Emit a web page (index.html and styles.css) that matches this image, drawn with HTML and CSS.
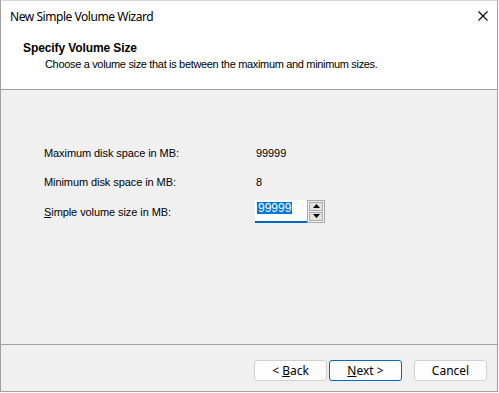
FILE: index.html
```html
<!DOCTYPE html>
<html>
<head>
<meta charset="utf-8">
<link rel="stylesheet" href="styles.css">
</head>
<body>
<div class="window">
  <div class="titlebar">
    <span class="title">New Simple Volume Wizard</span>
    <svg class="close" width="10" height="10" viewBox="0 0 10 10"><path d="M0.5 0.5 L9.5 9.5 M9.5 0.5 L0.5 9.5" stroke="#000" stroke-width="1.1" fill="none"/></svg>
  </div>
  <div class="header">
    <div class="heading">Specify Volume Size</div>
    <div class="subheading">Choose a volume size that is between the maximum and minimum sizes.</div>
  </div>
  <div class="content">
    <div class="row">
      <span class="label">Maximum disk space in MB:</span>
      <span class="value">99999</span>
    </div>
    <div class="row">
      <span class="label">Minimum disk space in MB:</span>
      <span class="value">8</span>
    </div>
    <div class="row">
      <span class="label"><u>S</u>imple volume size in MB:</span>
      <div class="spin">
        <div class="field"><span class="sel">99999</span></div>
        <div class="arrows">
          <div class="arrow"><svg width="7" height="4" viewBox="0 0 7 4"><path d="M3.5 0 L7 4 L0 4 Z" fill="#000"/></svg></div>
          <div class="arrow"><svg width="7" height="4" viewBox="0 0 7 4"><path d="M0 0 L7 0 L3.5 4 Z" fill="#000"/></svg></div>
        </div>
      </div>
    </div>
  </div>
  <div class="footer">
    <button class="btn">&lt; <u>B</u>ack</button>
    <button class="btn primary"><u>N</u>ext &gt;</button>
    <button class="btn cancel">Cancel</button>
  </div>
</div>
</body>
</html>
```
FILE: styles.css
```css
* { box-sizing: border-box; }
html, body { margin: 0; padding: 0; background: #ffffff; }
body { width: 499px; height: 393px; overflow: hidden; }
.window {
  width: 498px;
  height: 392px;
  background: #f0f0f0;
  border: 1px solid #a0a0a0;
  border-top-color: #d4d4d4;
  display: flex;
  flex-direction: column;
}
.titlebar {
  height: 29px;
  background: #fff;
  display: flex;
  align-items: center;
  justify-content: space-between;
  padding: 0 9px 0 9px;
}
.title {
  font-family: "Noto Sans", sans-serif;
  font-size: 12px;
  letter-spacing: -0.45px;
  color: #000;
  margin-top: 1px;
}
.close { margin-top: 1px; }
.header {
  height: 60px;
  background: #fff;
  border-bottom: 1px solid #a0a0a0;
  padding: 11px 0 0 22px;
  font-family: "Liberation Sans", Arial, sans-serif;
  font-size: 11px;
  color: #000;
}
.heading { font-weight: bold; font-size: 12px; line-height: 14px; letter-spacing: -0.1px; }
.subheading { padding-left: 22px; line-height: 14px; margin-top: 2px; letter-spacing: -0.33px; }
.content {
  flex: 1;
  padding: 48px 0 0 43px;
  font-family: "Liberation Sans", Arial, sans-serif;
  font-size: 11px;
  letter-spacing: -0.08px;
  color: #000;
  display: flex;
  flex-direction: column;
}
.row {
  display: flex;
  align-items: center;
  height: 29.5px;
}
.label { width: 211px; }
.value { padding-left: 1px; }
.spin { display: flex; align-items: stretch; height: 23px; margin-top: -1px; }
.field {
  width: 52px;
  background: #fff;
  border-bottom: 2px solid #0067c0;
  padding: 2px 0 0 2px;
}
.sel {
  display: inline-block;
  background: #0078d7;
  color: #fff;
  font-size: 12px;
  line-height: 12px;
  letter-spacing: 0;
  padding: 0 1px;
}
.arrows {
  width: 18px;
  border: 1px solid #a8a8a8;
  display: flex;
  flex-direction: column;
  padding: 1px;
  gap: 1px;
  background: #f0f0f0;
}
.arrow {
  flex: 1;
  border: 1px solid #adadad;
  background: #e1e1e1;
  display: flex;
  align-items: center;
  justify-content: center;
}
.footer {
  height: 47px;
  border-top: 1px solid #a0a0a0;
  display: flex;
  align-items: flex-start;
  padding: 15px 0 0 253px;
}
.btn {
  width: 73px;
  height: 21px;
  margin: 0;
  padding: 0;
  background: #fdfdfd;
  border: 1px solid #d0d0d0;
  border-radius: 3px;
  font-family: "Noto Sans", sans-serif;
  font-size: 12px;
  line-height: 17px;
  color: #000;
}
.btn.primary { margin-left: 2px; border-color: #0067c0; }
.btn.cancel { margin-left: 12px; }
```
